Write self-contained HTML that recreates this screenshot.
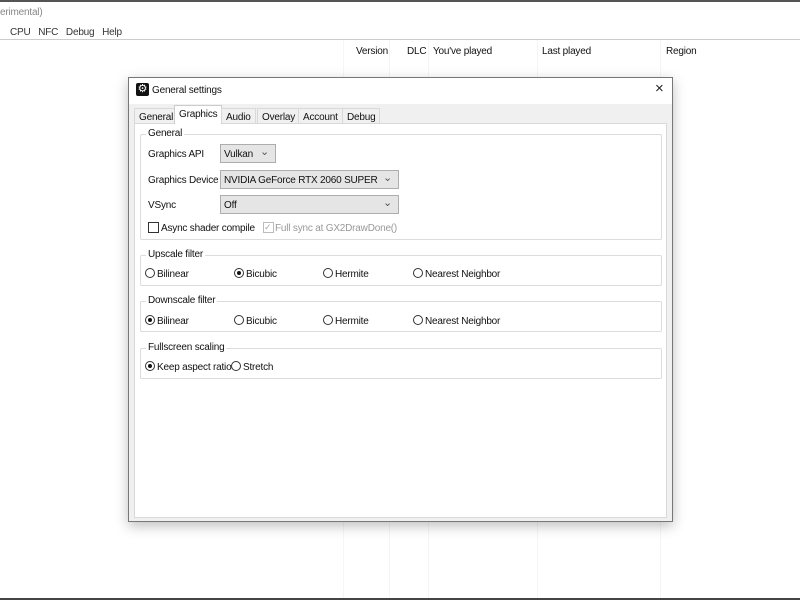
<!DOCTYPE html>
<html><head><style>
*{margin:0;padding:0;box-sizing:border-box}
body{width:800px;height:600px;background:#fff;font-family:"Liberation Sans",sans-serif;font-size:10px;letter-spacing:-0.2px;color:#111;position:relative;overflow:hidden}
.a{position:absolute;white-space:nowrap}
.vl{position:absolute;top:40px;bottom:0;width:1px;background:#f5f5f5}
.grp{position:absolute;border:1px solid #dcdcdc;border-radius:2px}
.gl{position:absolute;top:-7px;left:5px;background:#fff;padding:0 2px}
.sel{position:absolute;border:1px solid #adadad;background:#e5e5e5;height:19px;padding:4px 3px}
.sel:after{content:"⌄";position:absolute;right:6px;top:0px;color:#555;font-size:11px}
.r{position:absolute;width:10px;height:10px;border:1px solid #333;border-radius:50%;background:#fff}
.r.on:after{content:"";position:absolute;left:2px;top:2px;width:4px;height:4px;border-radius:50%;background:#111}
.tab{position:absolute;top:108px;height:15px;padding:3px 4px;border:1px solid #d9d9d9;border-bottom:none;background:#f0f0f0}
</style></head><body>
<div class="a" style="left:0;top:0;width:800px;height:2px;background:#555"></div>
<div class="a" style="left:0;top:7px;color:#888">erimental)</div>
<div class="a" style="left:10px;top:27px;color:#333">CPU&nbsp;&nbsp;&nbsp;NFC&nbsp;&nbsp;&nbsp;Debug&nbsp;&nbsp;&nbsp;Help</div>
<div class="a" style="left:0;top:39px;width:800px;height:1px;background:#ccc"></div>
<div class="vl" style="left:343px"></div><div class="vl" style="left:389px"></div><div class="vl" style="left:428px"></div><div class="vl" style="left:537px"></div><div class="vl" style="left:660px"></div>
<div class="a" style="left:356px;top:46px">Version</div>
<div class="a" style="left:407px;top:46px">DLC</div>
<div class="a" style="left:433px;top:46px">You've played</div>
<div class="a" style="left:542px;top:46px">Last played</div>
<div class="a" style="left:666px;top:46px">Region</div>

<div class="a" style="left:128px;top:77px;width:545px;height:445px;border:1px solid #777;background:#f0f0f0;box-shadow:0 4px 12px rgba(0,0,0,.25)">
 <div class="a" style="left:0;top:0;width:543px;height:26px;background:#fff"></div>
 <div class="a" style="left:7px;top:5px;width:13px;height:13px;background:#111;border-radius:2px;color:#fff;font-size:11px;line-height:13px;text-align:center">⚙</div>
 <div class="a" style="left:23px;top:7px">General settings</div>
 <div class="a" style="left:526px;top:2px;font-size:15px;color:#222">×</div>
 <div class="a" style="left:5px;top:45px;width:533px;height:395px;background:#fff;border:1px solid #d9d9d9"></div>
</div>
<div class="tab" style="left:134px">General</div>
<div class="tab" style="left:174px;top:105px;height:19px;background:#fff;border-color:#ccc">Graphics</div>
<div class="tab" style="left:221px">Audio</div>
<div class="tab" style="left:257px">Overlay</div>
<div class="tab" style="left:298px">Account</div>
<div class="tab" style="left:342px">Debug</div>

<div class="grp" style="left:140px;top:134px;width:522px;height:106px"><span class="gl">General</span></div>
<div class="a" style="left:148px;top:149px">Graphics API</div>
<div class="sel" style="left:220px;top:144px;width:56px">Vulkan</div>
<div class="a" style="left:148px;top:175px">Graphics Device</div>
<div class="sel" style="left:220px;top:170px;width:179px">NVIDIA GeForce RTX 2060 SUPER</div>
<div class="a" style="left:148px;top:200px">VSync</div>
<div class="sel" style="left:220px;top:195px;width:179px">Off</div>
<div class="a" style="left:148px;top:222px;width:11px;height:11px;border:1px solid #333"></div>
<div class="a" style="left:161px;top:223px">Async shader compile</div>
<div class="a" style="left:263px;top:222px;width:11px;height:11px;border:1px solid #bbb;color:#aaa;font-size:9px;line-height:9px">✓</div>
<div class="a" style="left:275px;top:223px;color:#999">Full sync at GX2DrawDone()</div>

<div class="grp" style="left:140px;top:255px;width:522px;height:31px"><span class="gl">Upscale filter</span></div>
<div class="r" style="left:145px;top:268px"></div><div class="a" style="left:157px;top:269px">Bilinear</div>
<div class="r on" style="left:234px;top:268px"></div><div class="a" style="left:246px;top:269px">Bicubic</div>
<div class="r" style="left:323px;top:268px"></div><div class="a" style="left:335px;top:269px">Hermite</div>
<div class="r" style="left:413px;top:268px"></div><div class="a" style="left:425px;top:269px">Nearest Neighbor</div>

<div class="grp" style="left:140px;top:301px;width:522px;height:31px"><span class="gl">Downscale filter</span></div>
<div class="r on" style="left:145px;top:315px"></div><div class="a" style="left:157px;top:316px">Bilinear</div>
<div class="r" style="left:234px;top:315px"></div><div class="a" style="left:246px;top:316px">Bicubic</div>
<div class="r" style="left:323px;top:315px"></div><div class="a" style="left:335px;top:316px">Hermite</div>
<div class="r" style="left:413px;top:315px"></div><div class="a" style="left:425px;top:316px">Nearest Neighbor</div>

<div class="grp" style="left:140px;top:348px;width:522px;height:31px"><span class="gl">Fullscreen scaling</span></div>
<div class="r on" style="left:145px;top:361px"></div><div class="a" style="left:157px;top:362px">Keep aspect ratio</div>
<div class="r" style="left:231px;top:361px"></div><div class="a" style="left:243px;top:362px">Stretch</div>

<div class="a" style="left:0;top:598px;width:800px;height:2px;background:#444"></div>
</body></html>
